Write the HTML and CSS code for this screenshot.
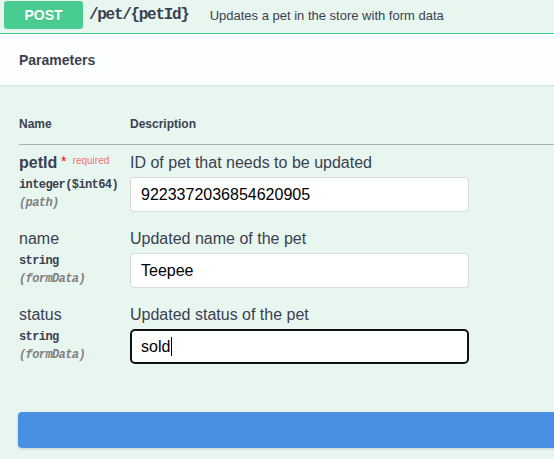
FILE: index.html
```html
<!DOCTYPE html>
<html>
<head>
<meta charset="utf-8">
<link rel="stylesheet" href="styles.css">
</head>
<body>
<div class="opblock">
  <div class="summary">
    <span class="method">POST</span>
    <span class="path">/pet/{petId}</span>
    <span class="summary-desc">Updates a pet in the store with form data</span>
  </div>
  <div class="section-header">
    <h4 class="section-title">Parameters</h4>
  </div>
  <div class="params">
    <div class="params-head">
      <div class="col-name">Name</div>
      <div class="col-desc">Description</div>
    </div>
    <div class="param-row">
      <div class="param-name">
        <div class="pname strong">petId<span class="req-star">&nbsp;*</span><span class="req">required</span></div>
        <div class="ptype">integer($int64)</div>
        <div class="pin">(path)</div>
      </div>
      <div class="param-desc">
        <div class="desc-text">ID of pet that needs to be updated</div>
        <input class="field" type="text" value="9223372036854620905">
      </div>
    </div>
    <div class="param-row">
      <div class="param-name">
        <div class="pname">name</div>
        <div class="ptype">string</div>
        <div class="pin">(formData)</div>
      </div>
      <div class="param-desc">
        <div class="desc-text">Updated name of the pet</div>
        <input class="field" type="text" value="Teepee">
      </div>
    </div>
    <div class="param-row">
      <div class="param-name">
        <div class="pname">status</div>
        <div class="ptype">string</div>
        <div class="pin">(formData)</div>
      </div>
      <div class="param-desc">
        <div class="desc-text">Updated status of the pet</div>
        <div class="field focused" role="textbox">sold<span class="caret"></span></div>
      </div>
    </div>
  </div>
  <div class="execute-wrap">
    <button class="execute" aria-label="Execute"></button>
  </div>
</div>
</body>
</html>
```
FILE: styles.css
```css
html, body {
  margin: 0;
  padding: 0;
  overflow: hidden;
  background: #e8f6f0;
}
body {
  width: 554px;
  height: 459px;
  font-family: "Liberation Sans", Arial, sans-serif;
  color: #3b4151;
}
.opblock {
  width: 640px;
  background: #e8f6f0;
}
.summary {
  display: flex;
  align-items: center;
  box-sizing: border-box;
  height: 34px;
  padding: 1px 0 4px 4px;
  border-bottom: 1px solid #49cc90;
}
.method {
  display: flex;
  align-items: center;
  justify-content: center;
  width: 79px;
  height: 28px;
  background: #49cc90;
  border-radius: 3px;
  color: #fff;
  font-weight: bold;
  font-size: 14px;
  text-shadow: 0 1px 0 rgba(0,0,0,.1);
}
.path {
  margin-left: 6px;
  font-family: "Liberation Mono", monospace;
  font-weight: bold;
  font-size: 16px;
  letter-spacing: -1.3px;
  color: #3b4151;
}
.summary-desc {
  margin-left: 21px;
  font-size: 13px;
  color: #3b4151;
}
.section-header {
  height: 51px;
  display: flex;
  align-items: center;
  padding-left: 19px;
  background: rgba(255,255,255,.9);
  box-shadow: 0 1px 2px rgba(0,0,0,.1);
  position: relative;
}
.section-title {
  margin: 0;
  font-size: 14px;
  font-weight: bold;
  color: #3b4151;
}
.params {
  padding: 32px 0 0 19px;
}
.params-head {
  display: flex;
  font-size: 12px;
  font-weight: bold;
  line-height: 15px;
  padding-bottom: 12px;
  border-bottom: 1px solid #a9b2b5;
  margin-bottom: 8px;
}
.col-name {
  width: 111px;
}
.param-row {
  display: flex;
  padding-bottom: 17px;
}
.param-name {
  width: 111px;
  flex: none;
}
.pname {
  font-size: 16px;
  line-height: 20px;
}
.pname.strong {
  font-weight: bold;
}
.req-star {
  color: #f00;
  font-size: 14px;
  font-weight: normal;
  position: relative;
  top: -2px;
}
.req {
  color: rgba(255,0,0,.6);
  font-size: 10px;
  font-weight: normal;
  vertical-align: top;
  position: relative;
  top: -2px;
  margin-left: 6px;
}
.ptype {
  margin-top: 3px;
  font-family: "Liberation Mono", monospace;
  font-size: 12px;
  font-weight: bold;
  letter-spacing: -0.6px;
  line-height: 18px;
  color: #3b4151;
}
.pin {
  font-family: "Liberation Mono", monospace;
  font-size: 12px;
  font-weight: bold;
  font-style: italic;
  letter-spacing: -0.6px;
  line-height: 18px;
  color: #808080;
}
.param-desc {
  display: flex;
  flex-direction: column;
}
.desc-text {
  font-size: 16px;
  line-height: 20px;
  margin-bottom: 4px;
  color: #3b4151;
}
.field {
  box-sizing: border-box;
  width: 339px;
  height: 35px;
  margin: 0;
  padding: 0 10px;
  border: 1px solid #d9d9d9;
  border-radius: 4px;
  background: #fff;
  font-family: "Liberation Sans", Arial, sans-serif;
  font-size: 16px;
  color: #000;
  outline: none;
}
.field.focused {
  display: flex;
  align-items: center;
  border: 2px solid #111;
  border-radius: 5px;
  padding-left: 9px;
}
.caret {
  display: inline-block;
  width: 1px;
  height: 19px;
  background: #000;
  margin-left: 1px;
}
.execute-wrap {
  padding: 31px 0 0 18px;
}
.execute {
  display: block;
  width: 600px;
  height: 36px;
  border: none;
  border-radius: 4px;
  background: #4990e2;
  box-shadow: 0 1px 3px rgba(0,0,0,.15);
}
```
